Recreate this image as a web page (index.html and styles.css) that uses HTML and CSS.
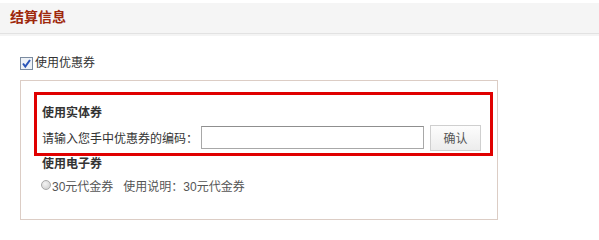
FILE: index.html
```html
<!DOCTYPE html>
<html lang="zh-CN">
<head>
<meta charset="utf-8">
<title>结算信息</title>
<link rel="stylesheet" href="styles.css">
</head>
<body>
<div class="header"><h2 class="title">结算信息</h2></div>
<label class="use-row">
  <span class="checkbox"><svg width="13" height="13" viewBox="0 0 13 13"><rect x="0.5" y="0.5" width="12" height="12" fill="#eef2f7" stroke="#7b8ba0"/><path d="M3 6.5 L5.3 9.5 L10 3" fill="none" stroke="#2a55b8" stroke-width="2"/></svg></span>
  <span>使用优惠券</span>
</label>
<div class="coupon-box">
  <div class="physical">
    <div class="sec-title">使用实体券</div>
    <div class="code-row">
      <span class="code-label">请输入您手中优惠券的编码：</span>
      <input class="code-input" type="text">
      <button class="confirm-btn" type="button">确认</button>
    </div>
  </div>
  <div class="sec-title e-title">使用电子券</div>
  <div class="radio-row">
    <span class="radio"></span><span>30元代金券</span><span class="desc">使用说明：30元代金券</span>
  </div>
</div>
</body>
</html>
```
FILE: styles.css
```css
* { box-sizing: border-box; }
body {
  margin: 0;
  background: #fff;
  font-family: "Liberation Sans", "Noto Sans CJK SC", sans-serif;
  font-size: 12px;
  color: #333;
}
.header {
  margin-top: 3px;
  height: 31px;
  background: #f5f5f5;
  border-bottom: 1px solid #e2e2e2;
  box-shadow: 0 2px 0 #f4f4f4;
  padding-left: 10px;
}
.title {
  margin: 0;
  font-size: 14px;
  line-height: 29px;
  font-weight: bold;
  color: #9e280c;
}
.use-row {
  display: flex;
  align-items: center;
  margin: 21px 0 0 20px;
  height: 16px;
  line-height: 16px;
}
.checkbox { width: 13px; height: 13px; margin-right: 2px; display: block; }
.checkbox svg { display: block; }
.coupon-box {
  margin: 9px 0 0 20px;
  width: 478px;
  height: 140px;
  border: 1px solid #dccdc5;
  padding: 11px 0 0 13px;
}
.physical {
  width: 459px;
  height: 64px;
  border: 3px solid #e00000;
  padding: 8px 0 0 5px;
}
.sec-title {
  font-weight: bold;
  line-height: 20px;
}
.code-row {
  display: flex;
  align-items: center;
  margin-top: 1px;
  height: 27px;
}
.code-label { width: 159px; }
.code-input {
  width: 223px;
  height: 23px;
  border: 1px solid #a8a8a8;
  border-top-color: #8f8f8f;
  margin: 0;
  padding: 0 4px;
  background: #fff;
}
.confirm-btn {
  margin-left: 6px;
  width: 51px;
  height: 26px;
  border: 1px solid #cfcfcf;
  background: linear-gradient(#fdfdfd, #ececec);
  font-family: inherit;
  font-size: 12px;
  color: #555;
  padding: 0;
}
.e-title {
  margin: 1px 0 0 8px;
  line-height: 14px;
}
.radio-row {
  display: flex;
  align-items: center;
  margin: 4px 0 0 7px;
  height: 20px;
  color: #555;
}
.radio {
  width: 10px;
  height: 10px;
  border-radius: 50%;
  border: 1px solid #a8a8a8;
  background: radial-gradient(circle at 40% 35%, #f4f4f4, #c9c9c9);
  margin-right: 1px;
}
.desc { margin-left: 10px; }
```
